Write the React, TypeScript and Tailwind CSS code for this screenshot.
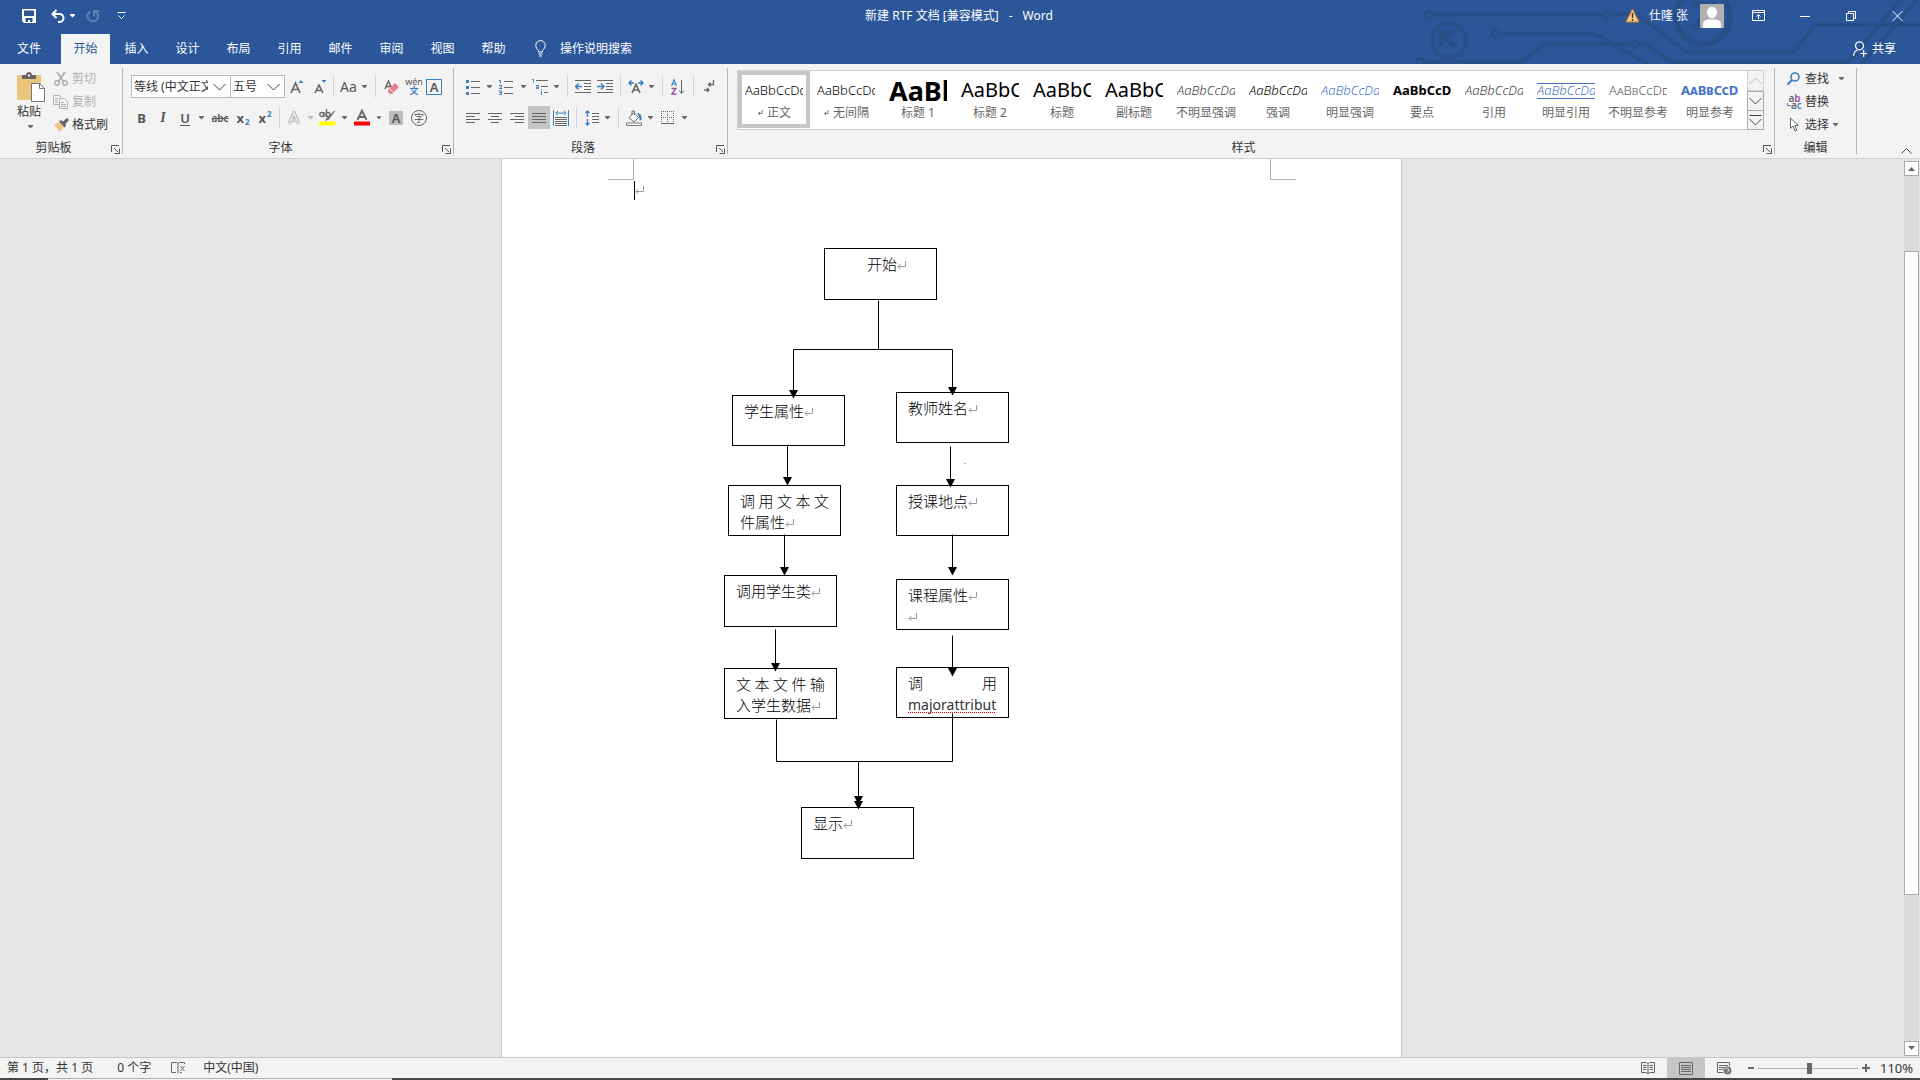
import React from "react";

type Kids = { children?: React.ReactNode };

const Caret = ({ tone = "#6a6a6a" }: { tone?: string }) => (
  <svg width="7" height="4" viewBox="0 0 7 4" aria-hidden="true">
    <path d="M1 0h5v1L3.5 3.5 1 1z" fill={tone} />
  </svg>
);

const Tool = ({ w, label, on, children }: Kids & { w: string; label: string; on?: boolean }) => (
  <button
    type="button"
    aria-label={label}
    className={`${w} flex h-[23px] shrink-0 items-center justify-center ${on ? "bg-[#c5c5c5]" : ""}`}
  >
    {children}
  </button>
);

const Sep = ({ m = "ml-1 mr-1" }: { m?: string }) => (
  <span className={`${m} h-[21px] w-px shrink-0 bg-[#d2d2d2]`} />
);

const Launcher = ({ label }: { label: string }) => (
  <button type="button" aria-label={label} className="flex h-3 w-[11px] shrink-0 items-end">
    <svg width="9" height="9" viewBox="0 0 9 9" fill="none" stroke="#555" aria-hidden="true">
      <path d="M.5 7V.5H8M3 3l4 4M8.500 3.500v5h-5" />
    </svg>
  </button>
);

const Group = ({
  label,
  size,
  launcher,
  children,
}: Kids & { label: string; size: string; launcher?: boolean }) => (
  <section aria-label={label} className={`${size} flex flex-col`}>
    <div className="h-[78px]">{children}</div>
    <div className="flex h-3 leading-3">
      <span className={`flex-1 text-center text-[#333] ${launcher ? "pr-1" : ""}`}>{label}</span>
      {launcher && <Launcher label={`${label}设置`} />}
    </div>
  </section>
);

const Divider = () => <span className="mt-1 h-[86px] w-px shrink-0 bg-[#b5b5b5]" />;

const Chevron = () => (
  <svg width="13" height="8" viewBox="0 0 13 8" fill="none" stroke="#444" aria-hidden="true">
    <path d="M.5 1l6 6 6-6" />
  </svg>
);

const Combo = ({ w, label, value }: { w: string; label: string; value: string }) => (
  <span className={`${w} relative flex h-[23px] shrink-0 border border-[#b8b8b8] bg-white`}>
    <select
      aria-label={label}
      className="w-full appearance-none overflow-hidden bg-transparent pr-[22px] pl-[2px] text-xs leading-5 text-[#333] outline-none"
    >
      <option>{value}</option>
    </select>
    <span className="pointer-events-none absolute top-[7px] right-1">
      <Chevron />
    </span>
  </span>
);

const Lines = ({ xs }: { xs: [number, number][] }) => (
  <svg width="14" height="12" viewBox="0 0 14 12" stroke="#666" aria-hidden="true">
    {xs.map(([a, b], i) => (
      <path key={i} d={`M${a} ${i * 3 + 1.5}H${b}`} />
    ))}
  </svg>
);

const Circuit = () => (
  <svg width="560" height="64" viewBox="0 0 560 64" fill="none" stroke="#284f87" strokeWidth="4" aria-hidden="true">
    <circle cx="69" cy="14.500" r="3.500" strokeWidth="3" />
    <circle cx="247" cy="14.500" r="3.500" strokeWidth="3" />
    <path d="M73 14.500H243M251 14.500H278L325 51.500H434L455 25H560" />
    <circle cx="135" cy="33.500" r="3.500" strokeWidth="3" />
    <path d="M139 33.500H234L288 64" />
    <circle cx="60" cy="62" r="3.500" strokeWidth="3" />
    <path d="M64 62H161L185 44H271M279 44H286L312 62H490" />
    <circle cx="275" cy="44" r="3.500" strokeWidth="3" />
    <path d="M487 64L540 0M502 64L560 -4" />
    <circle cx="89" cy="40.500" r="17" />
    <path d="M95 33H81V47M81 33L95 47" strokeWidth="5" />
    <circle cx="343" cy="17" r="27" strokeWidth="6" />
    <path d="M332 4.500H352V24M352 7L333 29" strokeWidth="6" />
  </svg>
);

const tabs = ["开始", "插入", "设计", "布局", "引用", "邮件", "审阅", "视图", "帮助"];

const Header = () => (
  <header className="relative bg-[#2b579a] text-white">
    <div className="pointer-events-none absolute top-0 right-0">
      <Circuit />
    </div>
    <div className="relative grid h-[34px] grid-cols-[1fr_auto_1fr] items-center pb-[3px]">
      <div className="flex items-center pl-[22px]">
        <button type="button" aria-label="保存">
          <svg width="14" height="14" viewBox="0 0 14 14" aria-hidden="true">
            <path fillRule="evenodd" fill="#fff" d="M0 0h14v14H2l-2-2zM2 1.500V7h10V1.500zM3.500 9v4H6v-2h2v2h2.500V9z" />
          </svg>
        </button>
        <button type="button" aria-label="撤消" className="ml-[15px]">
          <svg width="14" height="14" viewBox="0 0 14 14" fill="none" stroke="#fff" strokeWidth="2" aria-hidden="true">
            <path d="M5.500 1L1.500 5l4 4M2 5h6.500a4 4 0 0 1 0 8H7" />
          </svg>
        </button>
        <button type="button" aria-label="撤消选项" className="ml-1">
          <Caret tone="#fff" />
        </button>
        <button type="button" aria-label="重复" className="ml-[10px]">
          <svg width="14" height="14" viewBox="0 0 14 14" fill="none" stroke="#5e80b3" strokeWidth="2" aria-hidden="true">
            <path d="M4.500 2.300a5.300 5.300 0 1 0 5 .2M8 7V2h5" />
          </svg>
        </button>
        <button type="button" aria-label="自定义快速访问工具栏" className="ml-[17px]">
          <svg width="9" height="8" viewBox="0 0 9 8" fill="none" stroke="#fff" aria-hidden="true">
            <path d="M.5 .5h8M1.500 3.500l3 3 3-3" />
          </svg>
        </button>
      </div>
      <h1 className="flex gap-[10px] pr-[2px] text-xs">
        <span>新建 RTF 文档 [兼容模式]</span>
        <span>-</span>
        <span>Word</span>
      </h1>
      <div className="flex items-center justify-end pr-[17px]">
        <svg width="15" height="15" viewBox="0 0 15 15" aria-hidden="true">
          <path d="M7.500 1L14 14H1z" fill="#f7d083" stroke="#d9762b" />
          <path d="M7.500 5v5M7.500 11v2" stroke="#333" strokeWidth="1.500" />
        </svg>
        <button type="button" className="ml-[9px] flex items-center gap-3 text-xs">
          仕隆 张
          <svg width="24" height="24" viewBox="0 0 24 24" className="bg-[#b1b1b1]" aria-hidden="true">
            <path fill="#fff" d="M12 3c3 0 5 2 5 5s-2 6.500-5 6.500S7 11 7 8s2-5 5-5zM3 24v-4c0-3 2-4 5-4.500h8c3 .5 5 1.500 5 4.500v4z" />
          </svg>
        </button>
        <button type="button" aria-label="功能区显示选项" className="ml-7">
          <svg width="13" height="11" viewBox="0 0 13 11" fill="none" stroke="#fff" aria-hidden="true">
            <path d="M.5 .5h12v10H.5zM.5 2.500h12M6.500 9V4.500M4.500 6.500l2-2 2 2" />
          </svg>
        </button>
        <button type="button" aria-label="最小化" className="ml-[35px]">
          <svg width="10" height="10" viewBox="0 0 10 10" stroke="#fff" aria-hidden="true">
            <path d="M0 5.500h10" />
          </svg>
        </button>
        <button type="button" aria-label="向下还原" className="ml-[36px]">
          <svg width="10" height="10" viewBox="0 0 10 10" fill="none" stroke="#fff" aria-hidden="true">
            <path d="M.5 2.500h7v7h-7zM2.500 2.500v-2h7v7h-2" />
          </svg>
        </button>
        <button type="button" aria-label="关闭" className="ml-[36px]">
          <svg width="11" height="10" viewBox="0 0 11 10" stroke="#fff" aria-hidden="true">
            <path d="M.5 0l10 10M10.500 0l-10 10" />
          </svg>
        </button>
      </div>
    </div>
    <nav className="relative flex h-[30px] items-center text-xs">
      <button type="button" className="mr-[2px] h-[30px] w-[58px] pb-px">
        文件
      </button>
      {tabs.map((t, i) => (
        <button
          key={t}
          type="button"
          className={`mx-px h-[30px] w-[49px] pb-px ${i === 0 ? "bg-[#f3f3f3] text-[#2b579a]" : ""}`}
        >
          {t}
        </button>
      ))}
      <label className="ml-4 flex items-center gap-[14px] pb-px">
        <svg width="11" height="17" viewBox="0 0 11 17" fill="none" stroke="#fff" aria-hidden="true">
          <path d="M3.500 12V10.500C2 9 .8 7.500 .8 5.300a4.700 4.700 0 0 1 9.400 0c0 2.200-1.200 3.700-2.700 5.200V12zM3.500 14h4M4 16h3" />
        </svg>
        <input
          aria-label="操作说明搜索"
          placeholder="操作说明搜索"
          className="w-24 bg-transparent text-xs outline-none placeholder:text-white"
        />
      </label>
      <button type="button" className="mr-6 ml-auto flex items-center gap-[5px] pb-px">
        <svg width="14" height="16" viewBox="0 0 14 16" fill="none" stroke="#fff" strokeWidth="1.200" aria-hidden="true">
          <circle cx="6.500" cy="4.800" r="4" />
          <path d="M.6 15c0-3 1.500-5 4-6M7.500 12.500H14M10.700 9v7" />
        </svg>
        共享
      </button>
    </nav>
  </header>
);

const Clipboard = () => (
  <Group label="剪贴板" size="w-[122px] shrink-0" launcher>
    <div className="flex">
      <button type="button" className="flex w-[53px] flex-col items-center pt-2 pl-[9px] text-xs text-[#333]">
        <svg width="28" height="31" viewBox="0 0 28 31" aria-hidden="true">
          <path d="M0 3h24v25H0z" fill="#ecc57c" />
          <path d="M5 7V3h4c0-4 6-4 6 0h4v4z" fill="#666" />
          <path d="M11 2.500h2v2h-2z" fill="#f3f3f3" />
          <path d="M14.500 11.500h8l5 5v13h-13z" fill="#fff" stroke="#777" />
          <path d="M22.500 11.500v5h5" fill="none" stroke="#777" />
        </svg>
        <span className="mr-1 leading-[18px]">粘贴</span>
        <span className="mt-1 mr-px flex">
          <Caret />
        </span>
      </button>
      <div className="flex flex-col pt-[3px] text-xs">
        <button type="button" disabled className="flex h-[23px] items-center gap-1 pl-px text-[#b1b1b1]">
          <svg width="14" height="14" viewBox="0 0 14 14" fill="none" stroke="#b1b1b1" strokeWidth="1.500" aria-hidden="true">
            <path d="M3 0l6.500 9.500M11 0L4.500 9.500" strokeWidth="2" />
            <circle cx="3" cy="11" r="2.200" />
            <circle cx="11" cy="11" r="2.200" />
          </svg>
          剪切
        </button>
        <button type="button" disabled className="flex h-[23px] items-center gap-1 text-[#b1b1b1]">
          <svg width="15" height="14" viewBox="0 0 15 14" fill="#f3f3f3" stroke="#b1b1b1" aria-hidden="true">
            <path d="M.5 .5h6l2 2v7h-8zM2 3.500h3M2 5.500h3M2 7.500h3" />
            <path d="M6.500 3.500h5l3 3v7h-8zM8 7.500h3M8 9.500h5M8 11.500h5" />
          </svg>
          复制
        </button>
        <button type="button" className="flex h-[23px] items-center gap-[3px] pl-px text-[#333]">
          <svg width="15" height="14" viewBox="0 0 15 14" aria-hidden="true">
            <path d="M0 7l5-3 5 5-5 5c-1-3-2-5-5-7z" fill="#ecc57c" />
            <path d="M5 3.500l2-1.500 2 1.500L13 0l2 2-3.500 4L12 8l-1.500 1.500z" fill="#666" />
          </svg>
          格式刷
        </button>
      </div>
    </div>
  </Group>
);

const FontGroup = () => (
  <Group label="字体" size="w-[330px] shrink-0" launcher>
    <div className="flex flex-col gap-2 pt-[11px] pl-2 text-[#555]">
      <div className="flex items-center">
        <Combo w="w-[100px]" label="字体" value="等线 (中文正文)" />
        <Combo w="w-[55px] -ml-px" label="字号" value="五号" />
        <Tool w="w-[24px]" label="增大字号">
          <svg width="14" height="16" viewBox="0 0 14 16" aria-hidden="true">
            <path d="M1 14L5.500 4 10 14M2.500 10.500h6" fill="none" stroke="#666" strokeWidth="1.700" />
            <path d="M8.500 4L11 1l2.500 3z" fill="#3f7fbf" />
          </svg>
        </Tool>
        <Tool w="w-[22px]" label="减小字号">
          <svg width="13" height="16" viewBox="0 0 13 16" aria-hidden="true">
            <path d="M1 14l4-8 4 8M2.300 11.500h5.500" fill="none" stroke="#666" strokeWidth="1.600" />
            <path d="M7.500 1L10 4l2.500-3z" fill="#3f7fbf" />
          </svg>
        </Tool>
        <Sep m="ml-[2px] mr-px" />
        <Tool w="w-[38px] gap-1" label="更改大小写">
          <span className="text-sm leading-4">Aa</span>
          <Caret />
        </Tool>
        <Sep m="ml-[2px] mr-px" />
        <Tool w="w-[28px]" label="清除所有格式">
          <svg width="15" height="16" viewBox="0 0 15 16" aria-hidden="true">
            <path d="M1 10l3.500-8L8 10M2 7.500h5" fill="none" stroke="#666" strokeWidth="1.500" />
            <path d="M4 11l7-7 4 4-7 7H6l-2-2z" fill="#e57f8f" />
            <path d="M5.500 9.500l4 4" stroke="#f3f3f3" />
          </svg>
        </Tool>
        <Tool w="w-[18px]" label="拼音指南">
          <span className="flex flex-col items-center">
            <span className="text-[9px] leading-[8px]">wén</span>
            <span className="text-[9px] leading-[9px] font-bold text-[#3f7fbf]">文</span>
          </span>
        </Tool>
        <Tool w="w-[22px]" label="字符边框">
          <span className="flex size-4 items-center justify-center border border-[#3f7fbf] text-[13px] leading-3 font-semibold">
            A
          </span>
        </Tool>
      </div>
      <div className="flex items-center">
        <Tool w="w-[21px]" label="加粗">
          <b className="text-[13px] leading-4">B</b>
        </Tool>
        <Tool w="w-[22px]" label="倾斜">
          <span className="font-[Liberation_Serif] text-sm leading-4 font-bold italic">I</span>
        </Tool>
        <Tool w="w-[22px]" label="下划线">
          <span className="text-[13px] leading-4 font-semibold underline underline-offset-2">U</span>
        </Tool>
        <Tool w="w-[10px]" label="下划线选项">
          <Caret />
        </Tool>
        <Tool w="w-[28px]" label="删除线">
          <span className="text-[10px] leading-4 font-semibold line-through">abc</span>
        </Tool>
        <Tool w="w-[18px]" label="下标">
          <span className="text-[13px] leading-4 font-bold">x</span>
          <span className="mt-2 ml-px text-[8px] leading-2 font-bold text-[#3f7fbf]">2</span>
        </Tool>
        <Tool w="w-[26px]" label="上标">
          <span className="text-[13px] leading-4 font-bold">x</span>
          <span className="mb-2 ml-px text-[8px] leading-2 font-bold text-[#3f7fbf]">2</span>
        </Tool>
        <Sep m="ml-px mr-[2px]" />
        <Tool w="w-[24px]" label="文本效果">
          <svg width="14" height="14" viewBox="0 0 14 14" fill="none" aria-hidden="true">
            <path d="M2 13L7 2l5 11M4 9h6" stroke="#b8b8b8" strokeWidth="3.500" />
            <path d="M2 13L7 2l5 11M4 9h6" stroke="#f3f3f3" strokeWidth="1.200" />
          </svg>
        </Tool>
        <Tool w="w-[8px]" label="文本效果选项">
          <Caret tone="#b8b8b8" />
        </Tool>
        <Tool w="w-[26px]" label="突出显示">
          <svg width="16" height="17" viewBox="0 0 16 17" aria-hidden="true">
            <circle cx="2.800" cy="5.500" r="2" fill="none" stroke="#666" strokeWidth="1.300" />
            <path d="M5 3v5M7.500 0v8" stroke="#666" strokeWidth="1.300" />
            <circle cx="9" cy="5.500" r="2" fill="none" stroke="#666" strokeWidth="1.300" />
            <path d="M15.500 1.500l.5 1-6 8-4 1.500 1-2.500z" fill="#777" />
            <path d="M0 12.500h16v4H0z" fill="#ff0" />
          </svg>
        </Tool>
        <Tool w="w-[8px]" label="突出显示选项">
          <Caret />
        </Tool>
        <Tool w="w-[28px]" label="字体颜色">
          <svg width="16" height="17" viewBox="0 0 16 17" aria-hidden="true">
            <path d="M3.500 11L8 1.500l4.500 9.500M5 8h6" fill="none" stroke="#666" strokeWidth="1.800" />
            <path d="M0 12.500h16v4H0z" fill="red" />
          </svg>
        </Tool>
        <Tool w="w-[6px]" label="字体颜色选项">
          <Caret />
        </Tool>
        <Tool w="w-[28px]" label="字符底纹">
          <span className="flex size-[14px] items-center justify-center bg-[#bdbdbd] text-[13px] leading-3 font-semibold">
            A
          </span>
        </Tool>
        <Tool w="w-[18px]" label="带圈字符">
          <span className="flex size-4 items-center justify-center rounded-full border border-[#666] text-[10px] leading-3">
            字
          </span>
        </Tool>
      </div>
    </div>
  </Group>
);

const IndentIcon = ({ right }: { right?: boolean }) => (
  <svg width="16" height="14" viewBox="0 0 16 14" fill="none" stroke="#666" aria-hidden="true">
    <path d="M0 .5h16M9 3.500h7M9 6.500h7M9 9.500h7M0 12.500h16" />
    <path
      d={right ? "M0 6.500h6M4 3.500l3 3-3 3" : "M1 6.500h6M3.500 3.500l-3 3 3 3"}
      stroke="#3f7fbf"
      strokeWidth="1.500"
    />
  </svg>
);

const Paragraph = () => (
  <Group label="段落" size="w-[273px] shrink-0" launcher>
    <div className="flex flex-col gap-2 pt-[11px] pl-2">
      <div className="flex items-center">
        <Tool w="w-[22px]" label="项目符号">
          <svg width="14" height="16" viewBox="0 0 14 16" aria-hidden="true">
            <path d="M0 1h3v3H0zM0 7h3v3H0zM0 13h3v3H0z" fill="#3f7fbf" />
            <path d="M5 2.500h9M5 8.500h9M5 14.500h9" stroke="#666" />
          </svg>
        </Tool>
        <Tool w="w-[10px]" label="项目符号选项">
          <Caret />
        </Tool>
        <Tool w="w-[24px]" label="编号">
          <svg width="14" height="16" viewBox="0 0 14 16" fill="none" aria-hidden="true">
            <path d="M0 1.500h1.500V4.500M0 6.500h2.500v1.500L.5 9.500H3M0 12h2.500v3.500H0M.5 13.500h2" stroke="#3f7fbf" />
            <path d="M5 2.500h9M5 8.500h9M5 14.500h9" stroke="#666" />
          </svg>
        </Tool>
        <Tool w="w-[10px]" label="编号选项">
          <Caret />
        </Tool>
        <Tool w="w-[24px]" label="多级列表">
          <svg width="16" height="16" viewBox="0 0 16 16" fill="none" aria-hidden="true">
            <path d="M0 .5h1.500v3M4 6.500h2.500v3H4.500V8H6M9.500 10v1M9.500 12v4" stroke="#3f7fbf" />
            <path d="M4 1.500h12M9 7.500h7M12 13.500h4" stroke="#666" />
          </svg>
        </Tool>
        <Tool w="w-[8px]" label="多级列表选项">
          <Caret />
        </Tool>
        <Sep m="ml-[7px] mr-1" />
        <Tool w="w-[22px]" label="减少缩进量">
          <IndentIcon />
        </Tool>
        <Tool w="w-[22px]" label="增加缩进量">
          <IndentIcon right />
        </Tool>
        <Sep />
        <Tool w="w-[22px]" label="中文版式">
          <svg width="16" height="14" viewBox="0 0 16 14" fill="none" aria-hidden="true">
            <path d="M4 13l4-8.500L12 13M5.500 10h5" stroke="#666" strokeWidth="1.700" />
            <path d="M6 3H1M3.500 .5L1 3l2.500 2.500M10 3h5M12.500 .5L15 3l-2.500 2.500" stroke="#3f7fbf" strokeWidth="1.500" />
          </svg>
        </Tool>
        <Tool w="w-[8px]" label="中文版式选项">
          <Caret />
        </Tool>
        <Sep m="ml-[7px] mr-1" />
        <Tool w="w-[22px]" label="排序">
          <svg width="14" height="16" viewBox="0 0 14 16" fill="none" aria-hidden="true">
            <path d="M.5 7L3 .8 5.500 7M1.500 5h3" stroke="#3f7fbf" strokeWidth="1.200" />
            <path d="M.5 9.500H5L.8 15H5.500" stroke="#8e4fa8" strokeWidth="1.300" />
            <path d="M10.500 1v13M8 11.500l2.500 3 2.500-3" stroke="#666" />
          </svg>
        </Tool>
        <Sep />
        <Tool w="w-[22px]" label="显示编辑标记">
          <svg width="11" height="13" viewBox="0 0 11 13" fill="none" stroke="#666" aria-hidden="true">
            <path d="M9.500 0v4.500H4.500M6.500 2.500l-2 2 2 2" strokeWidth="1.300" />
            <path d="M0 10h5M3 8l2 2-2 2" strokeWidth="1.300" />
          </svg>
        </Tool>
      </div>
      <div className="flex items-center">
        <Tool w="w-[22px]" label="左对齐">
          <Lines xs={[[0, 14], [0, 9], [0, 14], [0, 9]]} />
        </Tool>
        <Tool w="w-[22px]" label="居中">
          <Lines xs={[[0, 14], [3, 11], [0, 14], [3, 11]]} />
        </Tool>
        <Tool w="w-[22px]" label="右对齐">
          <Lines xs={[[0, 14], [5, 14], [0, 14], [5, 14]]} />
        </Tool>
        <Tool w="w-[22px]" label="两端对齐" on>
          <Lines xs={[[0, 14], [0, 14], [0, 14], [0, 14]]} />
        </Tool>
        <Tool w="w-[22px]" label="分散对齐">
          <svg width="16" height="16" viewBox="0 0 16 16" fill="none" aria-hidden="true">
            <path d="M.5 0v16M15.500 0v16M3 3h10M5 .8L2.800 3 5 5.200M11 .8L13.200 3 11 5.200" stroke="#3f7fbf" />
            <path d="M2 7.500h12M2 9.500h12M2 11.500h12M2 13.500h12M2 15.500h12" stroke="#666" />
          </svg>
        </Tool>
        <Sep />
        <Tool w="w-[22px]" label="行和段落间距">
          <svg width="14" height="16" viewBox="0 0 14 16" fill="none" aria-hidden="true">
            <path d="M2.500 1v6M.5 3l2-2 2 2M2.500 9v6M.5 13l2 2 2-2" stroke="#3f7fbf" strokeWidth="1.400" />
            <path d="M7 3.500h7M7 6.500h7M7 9.500h7M7 12.500h7" stroke="#666" />
          </svg>
        </Tool>
        <Tool w="w-[8px]" label="行距选项">
          <Caret />
        </Tool>
        <Sep m="ml-[7px] mr-1" />
        <Tool w="w-[22px]" label="底纹">
          <svg width="16" height="16" viewBox="0 0 16 16" fill="none" aria-hidden="true">
            <path d="M3 7.500L7.500 3l5 4.500L8 12zM6 5V1h2.500v4" fill="#fff" stroke="#666" />
            <path d="M11 3c3 0 5 2 4.500 7-1.500 1-2.500 0-2-2z" fill="#3f7fbf" />
            <path d="M.5 13h15v2.500H.5z" fill="#fff" stroke="#777" />
          </svg>
        </Tool>
        <Tool w="w-[10px]" label="底纹选项">
          <Caret />
        </Tool>
        <Tool w="w-[24px]" label="边框">
          <svg width="13" height="13" viewBox="0 0 13 13" fill="none" stroke="#666" aria-hidden="true">
            <path d="M0 .5h13M0 6.500h13M.5 0v12M6.500 0v12M12.500 0v12" strokeDasharray="1 1" />
            <path d="M0 12.500h13" />
          </svg>
        </Tool>
        <Tool w="w-[10px]" label="边框选项">
          <Caret />
        </Tool>
      </div>
    </div>
  </Group>
);

type Style = { name: string; cls: string; mark?: boolean; sample?: string };
const styles: Style[] = [
  { name: "正文", cls: "text-[13px] font-light text-black", mark: true },
  { name: "无间隔", cls: "text-[13px] font-light text-black", mark: true },
  { name: "标题 1", cls: "text-[27px] font-bold text-black", sample: "AaBb" },
  { name: "标题 2", cls: "text-[20px] text-black", sample: "AaBbC" },
  { name: "标题", cls: "text-[20px] text-black", sample: "AaBbC" },
  { name: "副标题", cls: "text-[20px] text-black", sample: "AaBbC" },
  { name: "不明显强调", cls: "text-[13px] font-light italic text-[#404040]" },
  { name: "强调", cls: "text-[13px] font-light italic text-black" },
  { name: "明显强调", cls: "text-[13px] font-light italic text-[#4472c4]" },
  { name: "要点", cls: "text-[13px] font-bold text-black" },
  { name: "引用", cls: "text-[13px] font-light italic text-[#404040]" },
  { name: "明显引用", cls: "text-[13px] font-light italic text-[#4472c4] border-y border-[#4472c4]" },
  { name: "不明显参考", cls: "text-[13px] font-light text-[#5a5a5a] [font-variant:small-caps]" },
  { name: "明显参考", cls: "text-[13px] font-bold text-[#4472c4] [font-variant:small-caps]" },
];

const Styles = () => (
  <Group label="样式" size="min-w-0 flex-1" launcher>
    <div className="flex pt-[6px] pr-[10px] pl-[9px]">
      <div className="flex h-[60px] min-w-0 flex-1 overflow-hidden border border-r-0 border-[#d0d0d0] bg-white">
        {styles.map((s, i) => (
          <button
            key={s.name}
            type="button"
            className={`flex h-[57px] w-[72px] shrink-0 flex-col items-center justify-start border-4 pt-1 ${
              i === 0 ? "border-[#c6c6c6]" : "border-transparent"
            }`}
          >
            <span className="flex h-6 items-center">
              <span
                className={`${s.cls} flex h-4 w-[58px] items-center overflow-x-clip whitespace-nowrap`}
              >
                {s.sample ?? "AaBbCcDd"}
              </span>
            </span>
            <span className="flex items-center gap-1 text-xs leading-[22px] whitespace-nowrap text-[#666]">
              {s.mark && (
                <svg width="6" height="6" viewBox="0 0 6 6" fill="none" stroke="#777" aria-hidden="true">
                  <path d="M5 0v3.500H1.500M3 2L1.500 3.500 3 5" />
                </svg>
              )}
              {s.name}
            </span>
          </button>
        ))}
      </div>
      <div className="flex w-[17px] shrink-0 flex-col">
        <button type="button" aria-label="上一行样式" className="flex h-[21px] items-center justify-center border border-[#d0d0d0]">
          <svg width="13" height="8" viewBox="0 0 13 8" fill="none" stroke="#bbb" aria-hidden="true">
            <path d="M.5 7l6-6 6 6" />
          </svg>
        </button>
        <button type="button" aria-label="下一行样式" className="flex h-5 items-center justify-center border border-[#ababab]">
          <Chevron />
        </button>
        <button type="button" aria-label="更多样式" className="flex h-[19px] items-center justify-center border border-t-0 border-[#ababab]">
          <svg width="13" height="12" viewBox="0 0 13 12" fill="none" stroke="#444" aria-hidden="true">
            <path d="M.5 1.500h12M.5 5l6 6 6-6" />
          </svg>
        </button>
      </div>
    </div>
  </Group>
);

const Editing = () => (
  <Group label="编辑" size="w-[81px] shrink-0">
    <div className="flex flex-col items-start pt-[3px] pl-3 text-xs text-[#333]">
      <button type="button" className="flex h-[23px] items-center gap-[5px]">
        <svg width="13" height="13" viewBox="0 0 13 13" fill="none" stroke="#3f7fbf" aria-hidden="true">
          <circle cx="8" cy="5" r="4" strokeWidth="1.600" />
          <path d="M5 8l-4.500 4.500" strokeWidth="2" />
        </svg>
        查找
        <span className="ml-1">
          <Caret />
        </span>
      </button>
      <button type="button" className="flex h-[23px] items-center gap-[3px]">
        <span aria-hidden="true" className="flex w-[15px] flex-col text-[10px] leading-[7px] font-semibold">
          <span className="text-[#666]">
            a<span className="text-[#8e4fa8]">b</span>
          </span>
          <span className="flex items-center text-[#666]">
            <svg width="4" height="5" viewBox="0 0 4 5" fill="none" stroke="#3f7fbf">
              <path d="M.5 0v2.500H4" />
            </svg>
            a<span className="text-[#3f7fbf]">c</span>
          </span>
        </span>
        替换
      </button>
      <button type="button" className="flex h-[23px] items-center gap-[5px]">
        <svg width="13" height="15" viewBox="0 0 13 15" fill="#fff" stroke="#666" aria-hidden="true">
          <path d="M3.500 1v10.500L6 9l2 5 1.800-.8L7.800 8.500h3.500z" />
        </svg>
        <span className="flex items-center gap-[3px]">
          选择
          <Caret />
        </span>
      </button>
    </div>
  </Group>
);

const ReturnMark = () => (
  <svg width="10" height="10" viewBox="0 0 10 10" fill="none" stroke="#999" className="inline-block" aria-hidden="true">
    <path d="M8.500 0v5.500H1M3.500 3L1 5.500 3.500 8" />
  </svg>
);

type Node = {
  pos: string;
  lines: string[];
  tall?: boolean;
  spread?: boolean;
  indent?: boolean;
  blank?: boolean;
  typo?: boolean;
};
const nodes: Node[] = [
  { pos: "left-[323px] top-[89px]", lines: ["开始"], indent: true, tall: true },
  { pos: "left-[231px] top-[236px]", lines: ["学生属性"] },
  { pos: "left-[395px] top-[233px]", lines: ["教师姓名"] },
  { pos: "left-[227px] top-[326px]", lines: ["调用文本文", "件属性"], spread: true },
  { pos: "left-[395px] top-[326px]", lines: ["授课地点"] },
  { pos: "left-[223px] top-[416px]", lines: ["调用学生类"], tall: true },
  { pos: "left-[395px] top-[420px]", lines: ["课程属性"], blank: true },
  { pos: "left-[223px] top-[509px]", lines: ["文本文件输", "入学生数据"], spread: true },
  { pos: "left-[395px] top-[508px]", lines: ["调用", "majorattribut"], spread: true, typo: true },
  { pos: "left-[300px] top-[648px]", lines: ["显示"], tall: true },
];

const heads: [number, number][] = [
  [292, 239],
  [451, 236],
  [286, 326],
  [449, 328],
  [283, 416],
  [451, 416],
  [274, 512],
  [451, 517],
  [357, 645],
  [357, 650],
];

const Connectors = () => (
  <svg width="900" height="720" viewBox="0 0 900 720" className="absolute top-0 left-0" aria-hidden="true">
    <g fill="none" stroke="#000" transform="translate(.5 .5)">
      <path d="M377 141V190M292 232V190H451V230" />
      <path d="M286 285V320M449 287V322M283 375V410M451 375V410M274 470V506M451 476V511" />
      <path d="M275 560V602H451V554M357 602V640" />
      <path d="M463 304h1" stroke="#777" />
    </g>
    {heads.map(([x, y]) => (
      <path key={`${x}-${y}`} d={`M${x - 4} ${y - 8}h9l-4.500 8.500z`} fill="#000" />
    ))}
    <path d="M107 20.500H132.500V0M795 20.500H769.500V0" fill="none" stroke="#b0b0b0" />
  </svg>
);

const Page = () => (
  <article className="relative mx-auto w-[901px] shrink-0 bg-white shadow-[inset_1px_0_#c6c6c6,inset_-1px_0_#c6c6c6]">
    <div className="absolute top-[22px] left-[133px] flex h-[19px] items-center border-l border-black">
      <ReturnMark />
    </div>
    {nodes.map((n) => (
      <div
        key={n.lines[0] + n.pos}
        className={`${n.pos} absolute w-[113px] border border-black bg-white pt-[5px] text-[15px] leading-[21px] font-light text-black ${
          n.indent ? "pl-[42px]" : "pl-[11px]"
        } ${n.tall ? "h-[52px]" : "h-[51px]"}`}
      >
        {n.lines.map((l, i) => {
          const last = i === n.lines.length - 1;
          return (
            <p
              key={l}
              className={
                n.spread && !last
                  ? "w-[89px] [text-align-last:justify] [text-justify:inter-character]"
                  : "whitespace-nowrap"
              }
            >
              {n.typo && last ? (
                <span className="text-sm font-normal text-[#333] underline decoration-red-600 decoration-dotted decoration-1 underline-offset-2">
                  {l}
                </span>
              ) : (
                l
              )}
              {last && !n.typo && <ReturnMark />}
            </p>
          );
        })}
        {n.blank && (
          <p>
            <ReturnMark />
          </p>
        )}
      </div>
    ))}
    <Connectors />
  </article>
);

const ScrollBar = () => (
  <div className="mt-[2px] mr-px mb-px flex w-[15px] shrink-0 flex-col bg-[#dadada]">
    <button type="button" aria-label="向上滚动" className="flex h-[15px] items-center justify-center border border-[#ababab] bg-white">
      <svg width="7" height="4" viewBox="0 0 7 4" aria-hidden="true">
        <path d="M0 4l3.500-4L7 4z" fill="#666" />
      </svg>
    </button>
    <div className="grow-[75]" />
    <div className="grow-[643] border border-[#ababab] bg-white" />
    <div className="grow-[146]" />
    <button type="button" aria-label="向下滚动" className="flex h-[15px] items-center justify-center border border-[#ababab] bg-white">
      <svg width="7" height="4" viewBox="0 0 7 4" aria-hidden="true">
        <path d="M0 0l3.500 4L7 0z" fill="#666" />
      </svg>
    </button>
  </div>
);

const StatusBar = () => (
  <footer>
    <div className="flex h-[21px] items-center border-t border-[#c6c6c6] bg-[#f3f3f3] pl-[7px] text-xs leading-5 text-[#333]">
      <span>第 1 页，共 1 页</span>
      <span className="ml-6">0 个字</span>
      <button type="button" aria-label="校对" className="ml-5">
        <svg width="15" height="12" viewBox="0 0 15 12" fill="none" stroke="#666" aria-hidden="true">
          <path d="M5 10.500H.5V.5h5l1.500 1v10M7 1.500l1.500-1h5V2M9 10.500h2M9.500 4l4 5M13.500 4l-4 5" />
        </svg>
      </button>
      <span className="ml-[17px]">中文(中国)</span>
      <div className="ml-auto flex h-full items-center">
        <button type="button" aria-label="阅读视图" className="mr-3">
          <svg width="14" height="13" viewBox="0 0 14 13" fill="none" stroke="#666" aria-hidden="true">
            <path d="M.5 .5h5L7 2l1.500-1.500h5v10h-5L7 12l-1.500-1.500h-5zM7 2v10M2 3.500h3.500M2 5.500h3.500M2 7.500h3.500M8.500 3.500H12M8.500 5.500H12M8.500 7.500H12" />
          </svg>
        </button>
        <button type="button" aria-label="页面视图" className="flex h-full w-[38px] items-center justify-center bg-[#c5c5c5]">
          <svg width="14" height="13" viewBox="0 0 14 13" fill="none" stroke="#666" aria-hidden="true">
            <path d="M.5 .5h13v12H.5zM2 3.500h10M2 5.500h10M2 7.500h10M2 9.500h10" />
          </svg>
        </button>
        <button type="button" aria-label="Web 版式视图" className="ml-3">
          <svg width="15" height="13" viewBox="0 0 15 13" fill="none" stroke="#666" aria-hidden="true">
            <path d="M6 10.500H.5V.5h12V4M2 3.500h9M2 5.500h5M2 7.500h4" />
            <circle cx="10.500" cy="8.500" r="4" fill="#777" stroke="none" />
            <path d="M8.500 7l2-1 1.500 2-1.500 2.500" stroke="#ddd" />
          </svg>
        </button>
        <button type="button" aria-label="缩小" className="mr-1 ml-4">
          <span className="block h-[2px] w-[6px] bg-[#666]" />
        </button>
        <input
          type="range"
          aria-label="缩放"
          min={0}
          max={100}
          defaultValue={52}
          className="h-[11px] w-[100px] appearance-none bg-[linear-gradient(#b0b0b0,#b0b0b0)] bg-[length:100%_1px] bg-center bg-no-repeat [&::-webkit-slider-thumb]:h-[11px] [&::-webkit-slider-thumb]:w-[5px] [&::-webkit-slider-thumb]:appearance-none [&::-webkit-slider-thumb]:bg-[#666]"
        />
        <button type="button" aria-label="放大" className="ml-1">
          <svg width="8" height="8" viewBox="0 0 8 8" stroke="#666" strokeWidth="2" aria-hidden="true">
            <path d="M0 4h8M4 0v8" />
          </svg>
        </button>
        <button type="button" className="mr-2 ml-[10px] w-8 text-[13px] whitespace-nowrap">
          110%
        </button>
      </div>
    </div>
    <div className="flex h-[2px] bg-[#47474a]">
      <span className="ml-12 w-[344px] border-t border-[#b0b0b0] bg-[#f3f3f3]" />
    </div>
  </footer>
);

export default function App() {
  return (
    <div className="flex h-screen flex-col overflow-hidden bg-[#e6e6e6] font-['Noto_Sans','Noto_Sans_CJK_SC',sans-serif] text-xs">
      <Header />
      <div className="flex h-[95px] shrink-0 border-b border-[#d0d0d0] bg-[#f3f3f3]">
        <Clipboard />
        <Divider />
        <FontGroup />
        <Divider />
        <Paragraph />
        <Divider />
        <Styles />
        <Divider />
        <Editing />
        <Divider />
        <div className="flex w-[63px] shrink-0 items-end justify-end pr-2 pb-1">
          <button type="button" aria-label="折叠功能区">
            <svg width="11" height="6" viewBox="0 0 11 6" fill="none" stroke="#444" aria-hidden="true">
              <path d="M.5 5.500l5-5 5 5" />
            </svg>
          </button>
        </div>
      </div>
      <main className="flex min-h-0 flex-1">
        <div className="flex min-w-0 flex-1 overflow-hidden pr-px">
          <Page />
        </div>
        <ScrollBar />
      </main>
      <StatusBar />
    </div>
  );
}
